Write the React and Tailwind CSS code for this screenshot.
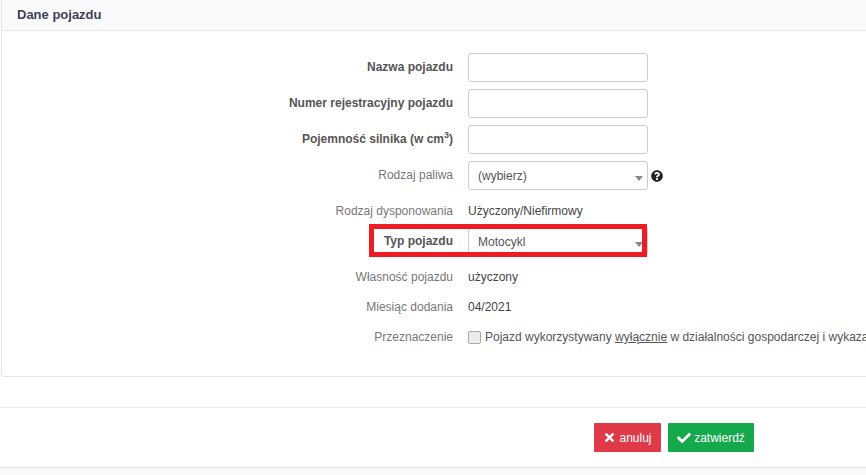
import React from "react";
import { FaTimes, FaCheck, FaQuestionCircle } from "react-icons/fa";

function Label({ children, bold, raised }) {
  return (
    <div
      className={
        "w-[466px] shrink-0 pr-[15px] text-right " +
        (bold ? "font-bold text-[#555] " : "text-[#777] ") +
        (raised ? "pb-[2px]" : "")
      }
    >
      {children}
    </div>
  );
}

function Caret() {
  return (
    <svg width="8" height="5" viewBox="0 0 8 5" className="absolute right-[4px] top-[14px]">
      <path d="M0 0H8L4 5Z" fill="#888" />
    </svg>
  );
}

function InputRow({ label }) {
  return (
    <div className="flex items-center h-[29px] mb-[7px]">
      <Label bold raised>
        {label}
      </Label>
      <input type="text" className="w-[180px] h-[29px] border border-[#ccc] rounded-[3px] bg-white" />
    </div>
  );
}

function StaticRow({ label, value, className }) {
  return (
    <div className={"flex items-center h-[16px] " + className}>
      <Label>{label}</Label>
      <div className="text-[#444]">{value}</div>
    </div>
  );
}

export default function App() {
  return (
    <div className="w-[866px] h-[475px] overflow-hidden bg-white text-[12px] leading-[16px] font-['Liberation_Sans',Arial,sans-serif]">
      <section className="w-[900px] h-[377px] ml-[1px] border border-t-0 border-[#e3e5e8] rounded-bl-[3px]">
        <header className="h-[31px] pl-[15px] pt-[7px] bg-[#f9fafc] border-b border-[#e3e5e8] text-[13px] font-bold text-[#3f4254]">
          Dane pojazdu
        </header>

        <div className="pt-[22px]">
          <InputRow label="Nazwa pojazdu" />
          <InputRow label="Numer rejestracyjny pojazdu" />
          <InputRow
            label={
              <>
                Pojemność silnika (w cm<sup className="text-[9px] leading-none">3</sup>)
              </>
            }
          />

          <div className="flex items-center h-[29px]">
            <Label raised>Rodzaj paliwa</Label>
            <div className="relative w-[180px] h-[29px] border border-[#ccc] rounded-[3px] pl-[9px] flex items-center text-[#555]">
              (wybierz)
              <Caret />
            </div>
            <FaQuestionCircle className="ml-[3px] text-[12px] text-[#222]" />
          </div>

          <StaticRow label="Rodzaj dysponowania" value="Użyczony/Niefirmowy" className="mt-[13px]" />

          <div className="relative flex items-center h-[29px] mt-[8px]">
            <Label bold raised>
              Typ pojazdu
            </Label>
            <div className="relative w-[180px] h-[29px] border border-[#ccc] rounded-[3px] pl-[9px] flex items-center text-[#555]">
              Motocykl
              <Caret />
            </div>
            <div className="absolute left-[367px] top-[-3px] w-[278px] h-[33px] border-[5px] border-[#ed1c24] pointer-events-none" />
          </div>

          <StaticRow label="Własność pojazdu" value="użyczony" className="mt-[13px]" />
          <StaticRow label="Miesiąc dodania" value="04/2021" className="mt-[14px]" />

          <div className="flex items-center h-[16px] mt-[14px]">
            <Label>Przeznaczenie</Label>
            <input
              type="checkbox"
              className="appearance-none w-[13px] h-[13px] m-0 shrink-0 border border-[#aaa] rounded-[2px] bg-[#ececec]"
            />
            <div className="pl-[4px] text-[#555] whitespace-nowrap">
              Pojazd wykorzystywany <span className="underline">wyłącznie</span> w działalności gospodarczej i wykazany
            </div>
          </div>
        </div>
      </section>

      <div className="mt-[30px] h-[61px] border-t border-b border-[#eeeeee] border-b-[#e3e5e8] flex items-start justify-end pr-[112px] pt-[15px] gap-[7px] text-white">
        <button className="h-[29px] w-[67px] bg-[#e03a48] rounded-[1px] flex items-center justify-center gap-[3px]">
          <FaTimes className="text-[13px]" />
          anuluj
        </button>
        <button className="h-[29px] w-[86px] bg-[#14a94b] rounded-[1px] flex items-center justify-center gap-[3px]">
          <FaCheck className="text-[14px]" />
          zatwierdź
        </button>
      </div>
      <div className="h-[10px] bg-[#f8f9fb]" />
    </div>
  );
}
